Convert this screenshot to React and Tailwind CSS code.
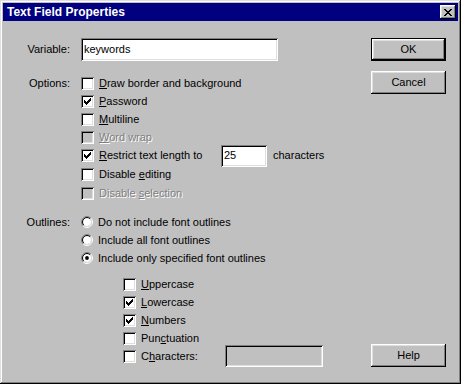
import React from "react";

const FONT = "font-['Liberation_Sans',Arial,sans-serif]";
const RAISED =
  "shadow-[inset_-1px_-1px_#000,inset_1px_1px_#fff,inset_-2px_-2px_#808080,inset_2px_2px_#dfdfdf]";
const SUNKEN =
  "shadow-[inset_1px_1px_#808080,inset_-1px_-1px_#fff,inset_2px_2px_#000,inset_-2px_-2px_#dfdfdf]";
const WINDOW =
  "shadow-[inset_-1px_-1px_#000,inset_1px_1px_#dfdfdf,inset_-2px_-2px_#808080,inset_2px_2px_#fff]";
const DIM = "text-[#808080] [text-shadow:1px_1px_0_#fff]";

// classic 7x7 check glyph, one string per pixel row
const CHECK = ["......X", ".....XX", "X...XXX", "XX.XXX.", "XXXXX..", ".XXX...", "..X...."];
const CROSS = ["XX....XX", ".XX..XX.", "..XXXX..", "...XX...", "..XXXX..", ".XX..XX.", "XX....XX"];

function Pixels({ rows, color = "#000" }) {
  const w = rows[0].length;
  const h = rows.length;
  return (
    <svg width={w} height={h} viewBox={`0 0 ${w} ${h}`} shapeRendering="crispEdges">
      {rows.flatMap((r, y) =>
        r.split("").map((c, x) =>
          c === "X" ? <rect key={`${x}-${y}`} x={x} y={y} width="1" height="1" fill={color} /> : null
        )
      )}
    </svg>
  );
}

function Accel({ text, at }) {
  if (at == null) return text;
  return (
    <>
      {text.slice(0, at)}
      <u className="underline-offset-[1px]">{text[at]}</u>
      {text.slice(at + 1)}
    </>
  );
}

function Box({ checked, disabled }) {
  return (
    <span
      className={`relative block w-[13px] h-[13px] shrink-0 ${SUNKEN} ${
        disabled ? "bg-[#c0c0c0]" : "bg-white"
      }`}
    >
      {checked && (
        <span className="absolute left-[3px] top-[3px] flex">
          <Pixels rows={CHECK} />
        </span>
      )}
    </span>
  );
}

function CheckRow({ label, at, checked, disabled, h = "h-[18px]", width, children }) {
  return (
    <div className={`flex items-center ${h}`}>
      <Box checked={checked} disabled={disabled} />
      <span className={`ml-[5px] whitespace-nowrap ${disabled ? DIM : ""} ${width || ""}`}>
        <Accel text={label} at={at} />
      </span>
      {children}
    </div>
  );
}

function Radio({ selected }) {
  // split along the diagonal: top-left half dark, bottom-right half light
  const arc = (r) => {
    const d = r * Math.SQRT1_2;
    return {
      tl: `M ${6 - d} ${6 + d} A ${r} ${r} 0 0 1 ${6 + d} ${6 - d}`,
      br: `M ${6 + d} ${6 - d} A ${r} ${r} 0 0 1 ${6 - d} ${6 + d}`,
    };
  };
  const o = arc(5.5);
  const i = arc(4.5);
  return (
    <svg width="12" height="12" viewBox="0 0 12 12" className="shrink-0">
      <circle cx="6" cy="6" r="4" fill="#fff" />
      <path d={o.tl} stroke="#808080" fill="none" />
      <path d={o.br} stroke="#fff" fill="none" />
      <path d={i.tl} stroke="#000" fill="none" />
      <path d={i.br} stroke="#dfdfdf" fill="none" />
      {selected && <circle cx="6" cy="6" r="1.9" fill="#000" />}
    </svg>
  );
}

function RadioRow({ label, selected }) {
  return (
    <div className="flex items-center h-[18px]">
      <Radio selected={selected} />
      <span className="ml-[5px] whitespace-nowrap">{label}</span>
    </div>
  );
}

function Button({ children, isDefault }) {
  return (
    <button
      className={`w-[75px] h-[23px] bg-[#c0c0c0] flex items-center justify-center ${
        isDefault
          ? "border border-black shadow-[inset_-1px_-1px_#000,inset_1px_1px_#fff,inset_-2px_-2px_#808080,inset_2px_2px_#dfdfdf]"
          : RAISED
      }`}
    >
      {children}
    </button>
  );
}

export default function App() {
  return (
    <div
      className={`w-[461px] h-[384px] bg-[#c0c0c0] p-[3px] flex flex-col text-[11px] text-black leading-none ${FONT} ${WINDOW}`}
    >
      {/* Title bar */}
      <div className="h-[18px] bg-[#000080] flex items-center justify-between pl-[4px] pr-[2px]">
        <span className="text-white font-bold text-[12px]">Text Field Properties</span>
        <span className={`w-[16px] h-[14px] bg-[#c0c0c0] flex items-center justify-center ${RAISED}`}>
          <Pixels rows={CROSS} />
        </span>
      </div>

      <div className="flex flex-1">
        {/* Form */}
        <div className="flex-1 pt-[17px]">
          <div className="flex items-center h-[23px]">
            <span className="w-[67px] text-right">Variable:</span>
            <div className={`ml-[11px] w-[197px] h-[23px] bg-white flex items-center pl-[3px] ${SUNKEN}`}>
              keywords
            </div>
          </div>

          <div className="flex mt-[13px]">
            <div className="w-[67px] h-[18px] flex items-center justify-end">Options:</div>
            <div className="ml-[11px] flex flex-col">
              <CheckRow label="Draw border and background" at={0} />
              <CheckRow label="Password" at={0} checked />
              <CheckRow label="Multiline" at={0} />
              <CheckRow label="Word wrap" at={0} disabled />
              <CheckRow label="Restrict text length to" at={0} checked h="h-[19px]" width="w-[122px]">
                <div className={`w-[46px] h-[22px] shrink-0 bg-white flex items-center pl-[3px] ${SUNKEN}`}>
                  25
                </div>
                <span className="ml-[6px]">characters</span>
              </CheckRow>
              <CheckRow label="Disable editing" at={8} h="h-[19px]" />
              <CheckRow label="Disable selection" at={8} disabled />
            </div>
          </div>

          <div className="flex mt-[11px]">
            <div className="w-[67px] h-[18px] flex items-center justify-end">Outlines:</div>
            <div className="ml-[11px] flex flex-col">
              <RadioRow label="Do not include font outlines" />
              <RadioRow label="Include all font outlines" />
              <RadioRow label="Include only specified font outlines" selected />
              <div className="ml-[42px] mt-[8px] flex flex-col">
                <CheckRow label="Uppercase" at={0} />
                <CheckRow label="Lowercase" at={0} checked />
                <CheckRow label="Numbers" at={0} checked />
                <CheckRow label="Punctuation" at={3} />
                <CheckRow label="Characters:" at={1} width="w-[84px]">
                  <div className={`w-[98px] h-[22px] shrink-0 bg-[#c0c0c0] ${SUNKEN}`} />
                </CheckRow>
              </div>
            </div>
          </div>
        </div>

        {/* Buttons */}
        <div className="w-[75px] mr-[12px] flex flex-col pt-[17px] pb-[14px]">
          <Button isDefault>OK</Button>
          <div className="mt-[10px]">
            <Button>Cancel</Button>
          </div>
          <div className="mt-auto">
            <Button>Help</Button>
          </div>
        </div>
      </div>
    </div>
  );
}
